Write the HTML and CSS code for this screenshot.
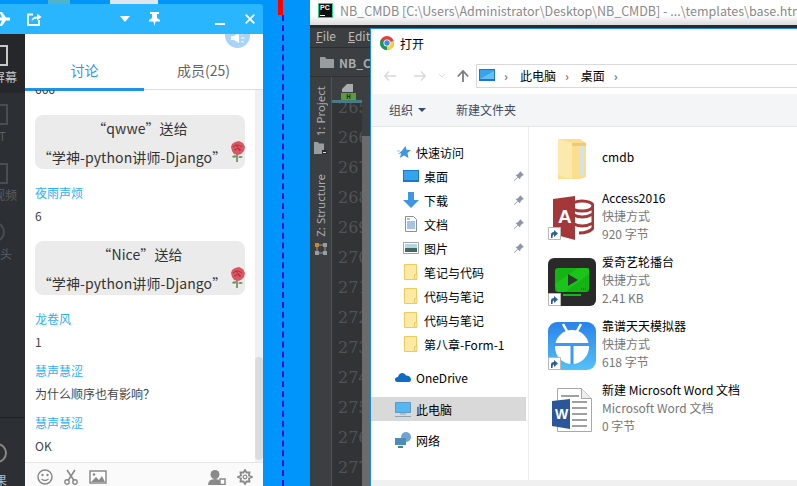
FILE: index.html
```html
<!DOCTYPE html>
<html>

<head>
    <title>打开</title>
    <link rel="stylesheet" href="styles.css">
</head>

<body>
    <svg class="defs" width="0" height="0">
        <symbol id="pin" viewBox="0 0 12 12">
            <path d="M7 1l4 4-1.500.5-2 2-.5 2L5 7.500 1.500 11 1 10.500 4.500 7 2.500 5l2-.5 2-2z" fill="#8f979f"/>
        </symbol>
        <symbol id="qfolder" viewBox="0 0 14 16">
            <path d="M.5.500h12v15H.5z" fill="#fbe9a6" stroke="#eecb5c"/>
            <path d="M10.500 10.500h2.500v5h-2.500z" fill="#fbe9a6" stroke="#eecb5c"/>
        </symbol>
        <symbol id="shortcut" viewBox="0 0 13 13">
            <path d="M.5.500h12v12H.5z" fill="#fff" stroke="#b9b9b9"/>
            <path d="M3 11V7.500Q3 5 6 5V3l4 3.500L6 10V7.500Q4.500 7.500 4.500 11z" fill="#2a5f9e"/>
        </symbol>
        <symbol id="rose" viewBox="0 0 15 21">
            <path d="M7 13v8" stroke="#5f7f4c" stroke-width="1.500"/>
            <path d="M7 15q-4-2-5 1 3 2 5-1zM8 16q3-2 5 0-3 2-5 0z" fill="#6f8f58"/>
            <path d="M2 3l3-2 4-1 4 2 2 4-1 4-3 3-3 1-4-1-2-3-1-4z" fill="#dc5563"/>
            <path d="M3 6q4-4 9 0M4 9q4-3 7 0M6 4q3 3 4 6" stroke="#a82f40" fill="none"/>
        </symbol>
    </svg>

    <div class="blob blob-a"></div>
    <div class="blob blob-b"></div>
    <div class="red-mark"></div>
    <div class="guide"></div>

    <!-- chat window -->
    <div class="chat">
        <div class="chat-title">
            <svg class="tt-ico tt-plane" width="12" height="14" viewBox="0 0 12 14"><path d="M0 5.500h4L1.500 0H4l4 5.500h4v3H8L4 14H1.500L4 8.500H0z" fill="#fff"/></svg>
            <svg class="tt-ico tt-share" width="15" height="14" viewBox="0 0 15 14"><path d="M6 2.500H1v10.500h11V8" fill="none" stroke="#fff" stroke-width="1.800"/><path d="M4.500 9Q5 4.500 10 4.500V1.500L14.500 5 10 8.500V6.500Q6.500 6.500 4.500 9z" fill="#fff"/></svg>
            <span class="tt-spacer"></span>
            <svg class="tt-ico tt-drop" width="10" height="6" viewBox="0 0 10 6"><path d="M0 0h10L5 6z" fill="#fff"/></svg>
            <svg class="tt-ico tt-pin" width="11" height="14" viewBox="0 0 11 14"><path d="M1 0h9v2H8v4l3 2v1.500H6.500L5.500 14l-1-4.500H0V8l3-2V2H1z" fill="#fff"/></svg>
            <svg class="tt-ico tt-min" width="10" height="2" viewBox="0 0 10 2"><path d="M0 0h10v2H0z" fill="#fff"/></svg>
            <svg class="tt-ico tt-close" width="10" height="10" viewBox="0 0 10 10"><path d="M.7.700l8.600 8.600M9.300.700L.7 9.300" stroke="#fff" stroke-width="1.800"/></svg>
        </div>
        <div class="chat-main">
            <div class="side">
                <div class="side-item side-active">
                    <div class="side-box"></div>
                    <span class="lbl-wide">屏幕</span>
                </div>
                <div class="side-item">
                    <div class="side-box"></div>
                    <span class="lbl-t">T</span>
                </div>
                <div class="side-item">
                    <div class="side-box"></div>
                    <span class="lbl-wide">视频</span>
                </div>
                <div class="side-item">
                    <div class="side-ring"></div>
                    <span class="lbl-head">头</span>
                </div>
                <div class="side-lines"></div>
                <div class="side-item side-last">
                    <div class="side-ring side-arc"></div>
                    <span class="lbl-last">果</span>
                </div>
            </div>
            <div class="talk">
                <div class="horn">
                    <svg width="14" height="10" viewBox="0 0 14 10"><path d="M0 3h3l5-3v10L3 7H0z" fill="#fff"/><path d="M10 1l3-.5M10 5h3.500M10 8.500l3 .5" stroke="#fff"/></svg>
                </div>
                <div class="tabs">
                    <div class="tab tab-on">讨论</div>
                    <div class="tab">成员(25)</div>
                </div>
                <div class="talk-body">
                    <div class="msgs">
                        <p class="old">666</p>
                        <div class="gift">
                            <p>“qwwe”送给</p>
                            <p class="gift-to">“学神-python讲师-Django”</p>
                            <svg class="rose" width="15" height="21"><use href="#rose"/></svg>
                        </div>
                        <p class="who">夜雨声烦</p>
                        <p class="said">6</p>
                        <div class="gift">
                            <p>“Nice”送给</p>
                            <p class="gift-to">“学神-python讲师-Django”</p>
                            <svg class="rose" width="15" height="21"><use href="#rose"/></svg>
                        </div>
                        <p class="who">龙卷风</p>
                        <p class="said">1</p>
                        <p class="who">慧声慧涩</p>
                        <p class="said">为什么顺序也有影响？</p>
                        <p class="who">慧声慧涩</p>
                        <p class="said">OK</p>
                    </div>
                    <div class="track"><div class="thumb"></div></div>
                </div>
                <div class="talk-tools">
                    <svg width="16" height="16" viewBox="0 0 16 16"><circle cx="8" cy="8" r="7" fill="none" stroke="#8a8a8a" stroke-width="1.500"/><circle cx="5.500" cy="6" r="1.200" fill="#8a8a8a"/><circle cx="10.500" cy="6" r="1.200" fill="#8a8a8a"/><path d="M4.500 10q3.500 3 7 0" fill="none" stroke="#8a8a8a" stroke-width="1.300"/></svg>
                    <svg width="14" height="16" viewBox="0 0 14 16"><circle cx="3" cy="13" r="2.200" fill="none" stroke="#8a8a8a" stroke-width="1.400"/><circle cx="11" cy="13" r="2.200" fill="none" stroke="#8a8a8a" stroke-width="1.400"/><path d="M4 11.500L11 1M10 11.500L3 1" stroke="#8a8a8a" stroke-width="1.600"/></svg>
                    <svg width="18" height="14" viewBox="0 0 18 14"><path d="M1 1h16v12H1z" fill="#fff" stroke="#8a8a8a" stroke-width="1.500"/><path d="M2 12l5-5 3 3 3-4 3 6z" fill="#8a8a8a"/><circle cx="5" cy="4.500" r="1.300" fill="#8a8a8a"/></svg>
                    <span class="tools-spacer"></span>
                    <svg width="18" height="16" viewBox="0 0 18 16"><circle cx="7" cy="5.500" r="4.500" fill="#8a8a8a"/><path d="M0 16q0-6 7-6 4 0 5 2v4z" fill="#8a8a8a"/><path d="M12 10h5v5.500h-5z" fill="#fff" stroke="#8a8a8a" stroke-width="1.500"/></svg>
                    <svg width="16" height="16" viewBox="0 0 16 16"><path d="M8 1l1.500 2.500h3l-.5 3L15 8l-3 1.500.5 3h-3L8 15l-1.500-2.500h-3l.5-3L1 8l3-1.500-.5-3h3z" fill="none" stroke="#8a8a8a" stroke-width="1.800"/><circle cx="8" cy="8" r="1.800" fill="none" stroke="#8a8a8a" stroke-width="1.300"/></svg>
                </div>
            </div>
        </div>
    </div>

    <!-- pycharm behind the dialog -->
    <div class="ide">
        <div class="ide-title">
            <div class="pc-logo">PC<i></i></div>
            <span>NB_CMDB [C:\Users\Administrator\Desktop\NB_CMDB] - ...\templates\base.html</span>
        </div>
        <div class="ide-menu"><span><u>F</u>ile</span><span><u>E</u>dit</span></div>
        <div class="ide-nav">
            <svg width="14" height="11" viewBox="0 0 14 11"><path d="M0 0h5l1.500 2H14v9H0z" fill="#9a9da0"/></svg>
            <b>NB_CMDB</b>
        </div>
        <div class="ide-body">
            <div class="strip">
                <div class="strip-label">1: Project</div>
                <svg class="strip-ico" width="13" height="12" viewBox="0 0 13 12"><path d="M0 0h4l1 1.500h5V12H0z" fill="#9a9da0"/><path d="M8 8h5v4H8z" fill="#2b2b2b"/><path d="M9 10.500h3" stroke="#ddd"/></svg>
                <div class="strip-label strip-two">Z: Structure</div>
                <svg class="strip-ico" width="12" height="12" viewBox="0 0 12 12"><path d="M0 0h4v4H0z" fill="#c68a2e"/><path d="M8 0h4v4H8zM0 8h4v4H0zM8 8h4v4H8z" fill="#9a9da0"/><path d="M4 2h4M2 4v4M10 4v4M4 10h4" stroke="#9a9da0"/></svg>
            </div>
            <div class="editor">
                <div class="file-tab">
                    <svg width="11" height="8" viewBox="0 0 11 8"><path d="M0 8V5l5-5h6v8z" fill="#a9acaf"/></svg>
                    <i>H</i>
                </div>
                <div class="gutter">
                    <div>265</div><div>266</div><div>267</div><div>268</div><div>269</div><div>270</div><div>271</div><div>272</div><div>273</div><div>274</div><div>275</div><div>276</div><div>277</div>
                </div>
            </div>
            <div class="ide-scroll"></div>
        </div>
    </div>

    <!-- open file dialog -->
    <div class="dlg">
        <div class="dlg-title">
            <svg width="14" height="14" viewBox="0 0 14 14"><circle cx="7" cy="7" r="7" fill="#db4437"/><path d="M7 7L1 3.500A7 7 0 0 0 7 14z" fill="#0f9d58"/><path d="M7 7l6.600-2.200A7 7 0 0 1 7 14z" fill="#ffcd40"/><circle cx="7" cy="7" r="3.500" fill="#fff"/><circle cx="7" cy="7" r="2.700" fill="#4285f4"/></svg>
            <span>打开</span>
        </div>
        <div class="dlg-nav">
            <svg width="12" height="10" viewBox="0 0 12 10"><path d="M5 .5L.8 5 5 9.500M1 5h11" fill="none" stroke="#d9d9d9" stroke-width="1.400"/></svg>
            <svg class="nav-next" width="12" height="10" viewBox="0 0 12 10"><path d="M7 .5L11.200 5 7 9.500M11 5H0" fill="none" stroke="#d9d9d9" stroke-width="1.400"/></svg>
            <svg class="nav-down" width="6" height="4" viewBox="0 0 6 4"><path d="M0 0l3 3 3-3" fill="none" stroke="#d9d9d9"/></svg>
            <svg class="nav-up" width="12" height="12" viewBox="0 0 12 12"><path d="M.8 6.500L6 1l5.200 5.500M6 1.500V12" fill="none" stroke="#7d7d7d" stroke-width="1.800"/></svg>
            <div class="path">
                <svg width="16" height="12" viewBox="0 0 16 12"><path d="M0 0h16v12H0z" fill="#1a78c8"/><path d="M1 1h14v9H1z" fill="#35a4ee"/><path d="M1 10L15 2v8z" fill="#66c0f4"/></svg>
                <em>›</em><span>此电脑</span><em>›</em><span>桌面</span><em>›</em>
            </div>
        </div>
        <div class="dlg-tools">
            <span>组织</span><i class="caret"></i><span class="new-dir">新建文件夹</span>
        </div>
        <div class="dlg-main">
            <div class="tree">
                <div class="node node-top">
                    <svg class="star" width="14" height="12" viewBox="0 0 14 12"><path d="M8.500 0l1 3.800L14 4l-3.500 3 1 5L7 9.500 3 12l1-4.500-1.500-.8L5 4.500z" fill="#3f97e0"/><path d="M0 5h3M1 7.500h2" stroke="#9cc6ea"/></svg>
                    <span>快速访问</span>
                </div>
                <div class="node node-sub">
                    <svg width="16" height="12" viewBox="0 0 16 12"><path d="M0 0h16v12H0z" fill="#1a78c8"/><path d="M1 1h14v9H1z" fill="#35a4ee"/></svg>
                    <span>桌面</span><svg class="pin" width="12" height="12"><use href="#pin"/></svg>
                </div>
                <div class="node node-sub">
                    <svg width="16" height="16" viewBox="0 0 16 16"><path d="M5 0h6v8h5l-8 8-8-8h5z" fill="#3f97e0"/></svg>
                    <span>下载</span><svg class="pin" width="12" height="12"><use href="#pin"/></svg>
                </div>
                <div class="node node-sub">
                    <svg width="16" height="16" viewBox="0 0 12 16"><path d="M.5.500h8l3 3v12H.5z" fill="#fff" stroke="#8c9096"/><path d="M2 3h3M2 6h8M2 8h8M2 10h8M2 12h8" stroke="#4c87c5"/></svg>
                    <span>文档</span><svg class="pin" width="12" height="12"><use href="#pin"/></svg>
                </div>
                <div class="node node-sub">
                    <svg width="16" height="12" viewBox="0 0 16 12"><path d="M.5.500h15v11H.5z" fill="#fff" stroke="#a3a3a3"/><path d="M2 2h12v4H2z" fill="#b5d4e6"/><path d="M2 6h12v4H2z" fill="#3f6a5c"/></svg>
                    <span>图片</span><svg class="pin" width="12" height="12"><use href="#pin"/></svg>
                </div>
                <div class="node node-sub"><svg width="14" height="16"><use href="#qfolder"/></svg><span>笔记与代码</span></div>
                <div class="node node-sub"><svg width="14" height="16"><use href="#qfolder"/></svg><span>代码与笔记</span></div>
                <div class="node node-sub"><svg width="14" height="16"><use href="#qfolder"/></svg><span>代码与笔记</span></div>
                <div class="node node-sub"><svg width="14" height="16"><use href="#qfolder"/></svg><span>第八章-Form-1</span></div>
                <div class="node node-top node-drive">
                    <svg width="16" height="10" viewBox="0 0 16 10"><path d="M2.500 10Q0 10 0 7.500T3 5Q4 1 7.500 1 10 1 11 3.500 15.500 3.500 16 7.500 16 10 14 10z" fill="#0f6cc4"/></svg>
                    <span>OneDrive</span>
                </div>
                <div class="node node-top node-pc">
                    <svg width="16" height="15" viewBox="0 0 16 15"><path d="M.5.500h15v10H.5z" fill="#56b6f2" stroke="#5b9bc7"/><path d="M5 12h6M0 14.500h16" stroke="#8ea4b3"/></svg>
                    <span>此电脑</span>
                </div>
                <div class="node node-top node-net">
                    <svg width="16" height="16" viewBox="0 0 16 16"><circle cx="11" cy="5" r="5" fill="#6fa6cf"/><path d="M0 6h11v7H0z" fill="#4b8db8"/><path d="M3 15h5" stroke="#4b7d9d" stroke-width="2"/></svg>
                    <span>网络</span>
                </div>
            </div>
            <div class="files">
                <div class="file file-folder">
                    <div class="file-ico">
                        <svg width="32" height="40" viewBox="0 0 32 40"><path d="M2 0h22l6 4v34l-6 2H2z" fill="#fbdf8e"/><path d="M2 0l14 4v36L2 36z" fill="#fce9ae"/><path d="M24 6h4v30h-4z" fill="#d6e1ea"/><path d="M16 4l14 0v3H16z" fill="#eecb70"/></svg>
                    </div>
                    <div class="file-info"><p>cmdb</p></div>
                </div>
                <div class="file">
                    <div class="file-ico">
                        <svg width="44" height="44" viewBox="0 0 44 44"><ellipse cx="32" cy="10" rx="11" ry="5" fill="none" stroke="#a4373a" stroke-width="3"/><path d="M21 10v24M43 10v22q-4 5-14 5M22 18q10 6 21 0M22 27q10 6 21 0" fill="none" stroke="#a4373a" stroke-width="3"/><path d="M3 3l22-3v44L3 38z" fill="#a4373a"/><text x="8" y="27" class="a-letter">A</text></svg>
                        <svg class="short" width="13" height="13"><use href="#shortcut"/></svg>
                    </div>
                    <div class="file-info"><p>Access2016</p><p class="meta">快捷方式</p><p class="meta">920 字节</p></div>
                </div>
                <div class="file">
                    <div class="file-ico">
                        <svg width="48" height="48" viewBox="0 0 48 48"><rect width="48" height="48" rx="6" fill="#2a2a2a"/><rect x="7" y="10" width="34" height="24" rx="3" fill="#12b512"/><path d="M7 26L30 10h11v6L17 34H10z" fill="#22cf22" opacity=".6"/><path d="M20 16l10 6-10 6z" fill="#2d3a2d"/><path d="M33 31h1M35 31h1M37 31h1" stroke="#0b5c0b"/><path d="M15 36h18v2H15z" fill="#14b814"/></svg>
                        <svg class="short" width="13" height="13"><use href="#shortcut"/></svg>
                    </div>
                    <div class="file-info"><p>爱奇艺轮播台</p><p class="meta">快捷方式</p><p class="meta">2.41 KB</p></div>
                </div>
                <div class="file">
                    <div class="file-ico">
                        <svg width="48" height="48" viewBox="0 0 48 48"><defs><linearGradient id="nox" x1="0" y1="0" x2="0" y2="1"><stop offset="0" stop-color="#2a82ea"/><stop offset="1" stop-color="#54c1f8"/></linearGradient></defs><rect width="48" height="48" rx="9" fill="url(#nox)"/><path d="M15 2l5 9M33 2l-5 9" stroke="#fff" stroke-width="2.500"/><circle cx="24" cy="25" r="17" fill="#fff"/><path d="M6 21h36v3H6z" fill="#3a9bf0"/><path d="M22.500 24h3v18h-3z" fill="#3a9bf0"/></svg>
                        <svg class="short" width="13" height="13"><use href="#shortcut"/></svg>
                    </div>
                    <div class="file-info"><p>靠谱天天模拟器</p><p class="meta">快捷方式</p><p class="meta">618 字节</p></div>
                </div>
                <div class="file">
                    <div class="file-ico">
                        <svg width="40" height="44" viewBox="0 0 40 44"><path d="M5.500.5h24l10 10v33h-34z" fill="#fff" stroke="#a8a8a8"/><path d="M29.500.5v10h10" fill="#eee" stroke="#a8a8a8"/><path d="M9 8h18M20 14h15M20 20h15M20 26h15M20 32h15M20 38h15" stroke="#a0a0a0" stroke-width="2"/><path d="M0 13l18-2v30L0 38z" fill="#2b579a"/><text x="3" y="31" class="w-letter">W</text></svg>
                    </div>
                    <div class="file-info"><p>新建 Microsoft Word 文档</p><p class="meta">Microsoft Word 文档</p><p class="meta">0 字节</p></div>
                </div>
            </div>
        </div>
        <div class="dlg-foot"></div>
    </div>
</body>

</html>
```

FILE: styles.css
```css
body {
    margin: 0;
    width: 797px;
    height: 486px;
    position: relative;
    overflow: hidden;
    background-color: #0095fb;
    font-family: "Noto Sans CJK SC", "Noto Sans", sans-serif;
    font-size: 12px;
    color: #333;
}

p {
    margin: 0;
}

svg {
    display: block;
    flex-shrink: 0;
}

.defs {
    position: absolute;
}

/* things on the desktop */
.blob {
    position: absolute;
    top: 0;
    height: 4px;
}

.blob-a {
    left: 48px;
    width: 22px;
    background-color: #4fb3c9;
}

.blob-b {
    left: 110px;
    width: 48px;
    background-color: #dfe6ee;
}

.red-mark {
    position: absolute;
    left: 278px;
    top: 0;
    width: 5px;
    height: 15px;
    background-color: #f00;
}

.guide {
    position: absolute;
    left: 282px;
    top: 15px;
    height: 471px;
    border-left: 2px dashed #3a10d0;
}

/* chat window */
.chat {
    position: absolute;
    left: 0;
    top: 4px;
    width: 263px;
    height: 482px;
    display: flex;
    flex-direction: column;
    border-top-right-radius: 3px;
    overflow: hidden;
}

.chat-title {
    height: 30px;
    background-color: #29b6ff;
    display: flex;
    align-items: center;
    flex-shrink: 0;
}

.tt-plane {
    margin-left: -2px;
}

.tt-share {
    margin-left: 17px;
}

.tt-spacer {
    flex: 1;
}

.tt-drop {
    margin-right: 19px;
}

.tt-pin {
    margin-right: 55px;
}

.tt-min {
    margin-right: 20px;
    margin-top: 9px;
}

.tt-close {
    margin-right: 8px;
}

.chat-main {
    flex: 1;
    display: flex;
    min-height: 0;
}

.side {
    width: 25px;
    background-color: #2c2f33;
    flex-shrink: 0;
    overflow: hidden;
    display: flex;
    flex-direction: column;
}

.side-item {
    height: 59px;
    flex-shrink: 0;
    display: flex;
    flex-direction: column;
    align-items: flex-end;
    color: #5a5d61;
    box-sizing: border-box;
    padding-top: 11px;
    white-space: nowrap;
}

.side-item span {
    line-height: 16px;
    margin-top: 3px;
}

.side-item .lbl-wide {
    margin-right: 8px;
}

.side-item .lbl-t {
    margin-right: 19px;
}

.side-item .lbl-head {
    margin-right: 13px;
}

.side-active {
    background-color: #25272b;
    color: #c8c8c8;
}

.side-box {
    width: 16px;
    height: 21px;
    margin-right: 17px;
    border: 2px solid #4a4d51;
    box-sizing: border-box;
}

.side-active .side-box {
    border-color: #c8c8c8;
}

.side-ring {
    width: 20px;
    height: 20px;
    border: 2px solid #4a4d51;
    border-radius: 50%;
    margin: 0 20px 1px 0;
    box-sizing: border-box;
}

.side-lines {
    height: 148px;
    flex-shrink: 0;
    border-bottom: 1px solid #1e2023;
    box-sizing: border-box;
}

.side-last {
    color: #b8b8b8;
    padding-top: 25px;
    height: auto;
}

.side-item .lbl-last {
    margin: 8px 18px 0 0;
}

.side-arc {
    border-color: #8a8a8a;
    margin-right: 18px;
}

.talk {
    flex: 1;
    min-width: 0;
    position: relative;
    display: flex;
    flex-direction: column;
    background-color: #fff;
    overflow: hidden;
}

.horn {
    position: absolute;
    right: 13px;
    top: -11px;
    width: 25px;
    height: 25px;
    border-radius: 50%;
    background-color: #a9d4f7;
    display: flex;
    align-items: center;
    justify-content: center;
    padding-top: 4px;
    box-sizing: border-box;
}

.tabs {
    display: flex;
    height: 56px;
    flex-shrink: 0;
    border-bottom: 1px solid #ddd;
    box-sizing: border-box;
}

.tab {
    width: 120px;
    height: 57px;
    padding-top: 26px;
    box-sizing: border-box;
    text-align: center;
    font-size: 14px;
    line-height: 20px;
    color: #666;
}

.tab-on {
    color: #2f96ea;
    border-bottom: 3px solid #1f93ea;
}

.talk-body {
    flex: 1;
    min-height: 0;
    display: flex;
    overflow: hidden;
}

.msgs {
    flex: 1;
    min-width: 0;
    padding: 0 10px;
    overflow: hidden;
    margin-top: -9px;
}

.old {
    line-height: 16px;
    margin-bottom: 18px;
}

.gift {
    position: relative;
    height: 54px;
    border-radius: 8px;
    background-color: #ebebeb;
    text-align: center;
    font-size: 14px;
    line-height: 26px;
    color: #333;
    white-space: nowrap;
    letter-spacing: .1px;
}

.said + .gift {
    margin-top: 16px;
}

.gift-to {
    margin-top: 3px;
    padding-right: 16px;
}

.rose {
    position: absolute;
    right: 0;
    top: 26px;
}

.who {
    margin-top: 11px;
    line-height: 18px;
    color: #29b0f5;
}

.gift + .who {
    margin-top: 15px;
}

.said {
    margin-top: 5px;
    line-height: 18px;
    color: #444;
}

.track {
    width: 8px;
    background-color: #f0f0f0;
    flex-shrink: 0;
    padding-top: 267px;
    box-sizing: border-box;
}

.thumb {
    height: 103px;
    background-color: #dcdcdc;
    border-radius: 4px;
}

.talk-tools {
    height: 24px;
    flex-shrink: 0;
    background-color: #fafafa;
    border-top: 1px solid #e6e6e6;
    box-sizing: border-box;
    display: flex;
    align-items: center;
    gap: 11px;
    padding: 4px 10px 0 12px;
}

.tools-spacer {
    flex: 1;
}

/* pycharm window */
.ide {
    position: absolute;
    left: 310px;
    top: 0;
    width: 487px;
    height: 486px;
    display: flex;
    flex-direction: column;
    background-color: #3c3f41;
}

.ide-title {
    height: 28px;
    flex-shrink: 0;
    display: flex;
    align-items: center;
    gap: 7px;
    padding: 0 0 4px 8px;
    box-sizing: border-box;
    background: linear-gradient(#fff 60%, #dcdcdc);
    color: #8a8a8a;
    font-size: 12.500px;
    white-space: nowrap;
    overflow: hidden;
    border-bottom: 3px solid #2b2b2b;
}

.pc-logo {
    width: 15px;
    height: 15px;
    flex-shrink: 0;
    position: relative;
    background-color: #111;
    border: 1px solid #21d789;
    box-sizing: border-box;
    color: #fff;
    font-size: 7px;
    font-weight: bold;
    line-height: 8px;
    padding-left: 1px;
    font-family: "Liberation Sans", sans-serif;
}

.pc-logo i {
    position: absolute;
    left: 1px;
    bottom: 1px;
    width: 5px;
    height: 1px;
    background-color: #fff;
}

.ide-menu {
    height: 20px;
    box-sizing: border-box;
    flex-shrink: 0;
    display: flex;
    gap: 12px;
    padding-left: 6px;
    color: #bbb;
    font-size: 12px;
    line-height: 16px;
    white-space: nowrap;
    border-bottom: 1px solid #2e2e2e;
}

.ide-nav {
    height: 29px;
    flex-shrink: 0;
    display: flex;
    align-items: center;
    gap: 5px;
    padding-left: 10px;
    box-sizing: border-box;
    color: #a8abae;
    border-bottom: 1px solid #323232;
}

.ide-nav b {
    white-space: nowrap;
    font-size: 12px;
}

.ide-body {
    flex: 1;
    min-height: 0;
    display: flex;
}

.strip {
    width: 21px;
    flex-shrink: 0;
    display: flex;
    flex-direction: column;
    align-items: center;
    padding-top: 9px;
    border-right: 1px solid #505254;
    box-sizing: content-box;
    color: #a8abae;
}

.strip-label {
    writing-mode: vertical-rl;
    transform: rotate(180deg);
    font-size: 11.500px;
    line-height: 14px;
    white-space: nowrap;
    font-family: "Noto Sans", sans-serif;
}

.strip-ico {
    margin-top: 6px;
}

.strip-two {
    margin-top: 20px;
}

.editor {
    width: 30px;
    flex-shrink: 0;
    background-color: #313335;
    overflow: hidden;
}

.file-tab {
    position: relative;
    z-index: 1;
    height: 26px;
    box-sizing: border-box;
    padding: 7px 0 0 10px;
    background-color: #3c3f41;
    border-bottom: 3px solid #4a7a86;
}

.file-tab i {
    display: block;
    width: 15px;
    height: 7px;
    margin: 1px 0 0 -1px;
    background-color: #5c9a3c;
    color: #15270c;
    font-size: 6px;
    line-height: 7px;
    font-weight: bold;
    font-style: normal;
    text-align: center;
}

.gutter {
    padding: 0 0 0 6px;
    margin-top: -10px;
    font-family: "DejaVu Serif", serif;
    font-size: 16px;
    line-height: 30px;
    color: #505355;
    white-space: nowrap;
}

.ide-scroll {
    width: 8px;
    flex-shrink: 0;
    background: linear-gradient(#3c3f41 59px, #6b6b6b 59px);
}

/* file dialog */
.dlg {
    position: absolute;
    left: 370px;
    top: 28px;
    width: 427px;
    height: 458px;
    background-color: #fff;
    border-left: 1px solid #1f8ae0;
    border-top: 1px solid #1f8ae0;
    box-sizing: border-box;
    display: flex;
    flex-direction: column;
    color: #000;
}

.dlg-title {
    height: 31px;
    flex-shrink: 0;
    display: flex;
    align-items: center;
    gap: 6px;
    padding: 0 0 3px 9px;
    box-sizing: border-box;
}

.dlg-nav {
    height: 34px;
    flex-shrink: 0;
    display: flex;
    align-items: center;
    padding: 0 0 2px 13px;
    box-sizing: border-box;
}

.nav-next {
    margin-left: 18px;
}

.nav-down {
    margin-left: 13px;
}

.nav-up {
    margin-left: 12px;
}

.path {
    flex: 1;
    height: 24px;
    margin-left: 7px;
    border-top: 1px solid #d9d9d9;
    border-bottom: 1px solid #d9d9d9;
    border-left: 1px solid #d9d9d9;
    box-sizing: border-box;
    display: flex;
    align-items: center;
    padding: 0 0 2px 2px;
}

.path em {
    font-style: normal;
    color: #777;
    margin: 0 12px 0 9px;
    font-weight: bold;
}

.dlg-tools {
    height: 33px;
    flex-shrink: 0;
    background-color: #f4f5f7;
    border-bottom: 1px solid #e5e5e5;
    box-sizing: border-box;
    display: flex;
    align-items: center;
    padding: 0 0 1px 18px;
    color: #3c4a66;
}

.caret {
    width: 0;
    height: 0;
    margin-left: 5px;
    border-left: 4px solid transparent;
    border-right: 4px solid transparent;
    border-top: 4px solid #3c4a66;
}

.new-dir {
    margin-left: 30px;
}

.dlg-main {
    flex: 1;
    min-height: 0;
    display: flex;
}

.tree {
    width: 158px;
    flex-shrink: 0;
    border-right: 1px solid #eee;
    box-sizing: border-box;
    padding-top: 13px;
}

.node {
    height: 24px;
    display: flex;
    align-items: center;
    white-space: nowrap;
}

.node-top {
    padding-left: 24px;
    gap: 5px;
}

.star {
    margin-left: 2px;
}

.node-sub {
    padding-left: 32px;
    gap: 5px;
}

.node-sub svg:first-child {
    width: 16px;
}

.pin {
    margin-left: auto;
    margin-right: 3px;
}

.node-drive {
    margin-top: 9px;
}

.node-pc {
    margin-top: 8px;
    background-color: #d9d9d9;
    margin-right: 2px;
}

.node-net {
    margin-top: 7px;
}

.files {
    flex: 1;
    min-width: 0;
    padding: 8px 0 0 19px;
    overflow: hidden;
}

.file {
    height: 64px;
    display: flex;
    align-items: center;
}

.file-folder {
    height: 48px;
    margin-bottom: 3px;
}

.file-ico {
    width: 48px;
    position: relative;
    display: flex;
    justify-content: center;
    margin-right: 6px;
}

.short {
    position: absolute;
    left: 0;
    bottom: 0;
}

.file-info {
    line-height: 18px;
    white-space: nowrap;
    margin-bottom: 4px;
}

.meta {
    color: #777;
}

.a-letter {
    font-family: "Liberation Sans", sans-serif;
    font-size: 19px;
    font-weight: bold;
    fill: #fff;
}

.w-letter {
    font-family: "Liberation Sans", sans-serif;
    font-size: 14px;
    font-weight: bold;
    fill: #fff;
}

.dlg-foot {
    height: 6px;
    flex-shrink: 0;
    background-color: #f0f0f0;
}
```
